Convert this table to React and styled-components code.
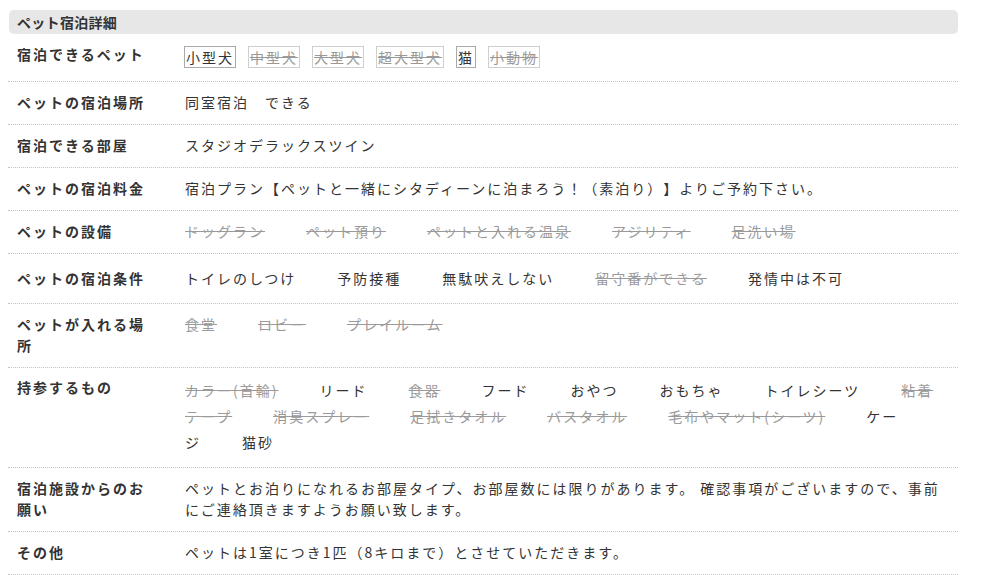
import React from 'react';
import styled, { createGlobalStyle } from 'styled-components';

const GlobalStyle = createGlobalStyle`
  body {
    margin: 8px;
    background: #fff;
    color: #333;
    font-family: "Noto Sans CJK JP", "Noto Sans", sans-serif;
    text-spacing-trim: space-all;
  }
`;

const Section = styled.section`
  width: 950px;
`;

const Heading = styled.h2`
  margin: 2px 0 0 1px;
  height: 24px;
  padding: 0 8px;
  background: #e7e7e7;
  border-radius: 5px;
  font-size: 14px;
  font-weight: bold;
  line-height: 24px;
  letter-spacing: 0.3px;
  color: #333;
`;

const Row = styled.div`
  display: flex;
  padding: ${(p) => p.$top || 10}px 11px ${(p) => p.$bottom || 11}px 9px;
  border-bottom: 1px dotted #c4c4c4;
  line-height: ${(p) => p.$lh || 21}px;
`;

const Label = styled.div`
  flex: 0 0 168px;
  box-sizing: border-box;
  padding-right: 30px;
  font-size: 14px;
  font-weight: bold;
  letter-spacing: 2px;
  line-height: ${(p) => p.$lh || 21}px;
  color: #333;
`;

const Value = styled.div`
  flex: 1;
  font-size: 14px;
  letter-spacing: 2px;
  color: #333;
  line-height: ${(p) => p.$lh || 21}px;
`;

const TagList = styled.div`
  display: flex;
  align-items: center;
  gap: 12px;
  height: 26px;
  margin-left: -1px;
`;

const Tag = styled.span`
  display: inline-block;
  padding: 0 1px;
  border: 1px solid ${(p) => (p.$off ? '#cfcfcf' : '#aaa')};
  line-height: 20px;
  font-size: 14px;
  letter-spacing: 2px;
  color: ${(p) => (p.$off ? '#999' : '#333')};
  text-decoration: ${(p) => (p.$off ? 'line-through' : 'none')};
`;

const Item = styled.span`
  margin-right: 41px;
  color: ${(p) => (p.$off ? '#9a9a9a' : '#333')};
  text-decoration: ${(p) => (p.$off ? 'line-through' : 'none')};
`;

const pets = [
  ['小型犬', false],
  ['中型犬', true],
  ['大型犬', true],
  ['超大型犬', true],
  ['猫', false],
  ['小動物', true],
];

const facilities = [
  ['ドッグラン', true],
  ['ペット預り', true],
  ['ペットと入れる温泉', true],
  ['アジリティ', true],
  ['足洗い場', true],
];

const conditions = [
  ['トイレのしつけ', false],
  ['予防接種', false],
  ['無駄吠えしない', false],
  ['留守番ができる', true],
  ['発情中は不可', false],
];

const places = [
  ['食堂', true],
  ['ロビー', true],
  ['プレイルーム', true],
];

const belongings = [
  ['カラー(首輪)', true],
  ['リード', false],
  ['食器', true],
  ['フード', false],
  ['おやつ', false],
  ['おもちゃ', false],
  ['トイレシーツ', false],
  ['粘着テープ', true],
  ['消臭スプレー', true],
  ['足拭きタオル', true],
  ['バスタオル', true],
  ['毛布やマット(シーツ)', true],
  ['ケージ', false],
  ['猫砂', false],
];

const ItemList = ({ items }) => (
  <>
    {items.map(([name, off]) => (
      <Item key={name} $off={off}>{name}</Item>
    ))}
  </>
);

const App = () => (
  <>
    <GlobalStyle />
    <Section>
      <Heading>ペット宿泊詳細</Heading>

      <Row>
        <Label>宿泊できるペット</Label>
        <Value>
          <TagList>
            {pets.map(([name, off]) => (
              <Tag key={name} $off={off}>{name}</Tag>
            ))}
          </TagList>
        </Value>
      </Row>

      <Row>
        <Label>ペットの宿泊場所</Label>
        <Value>同室宿泊　できる</Value>
      </Row>

      <Row>
        <Label>宿泊できる部屋</Label>
        <Value>スタジオデラックスツイン</Value>
      </Row>

      <Row>
        <Label>ペットの宿泊料金</Label>
        <Value>宿泊プラン【ペットと一緒にシタディーンに泊まろう！（素泊り）】よりご予約下さい。</Value>
      </Row>

      <Row>
        <Label>ペットの設備</Label>
        <Value><ItemList items={facilities} /></Value>
      </Row>

      <Row>
        <Label $lh={28}>ペットの宿泊条件</Label>
        <Value $lh={28}><ItemList items={conditions} /></Value>
      </Row>

      <Row>
        <Label>ペットが入れる場所</Label>
        <Value><ItemList items={places} /></Value>
      </Row>

      <Row $top={9} $bottom={12}>
        <Label>持参するもの</Label>
        <Value $lh={26}><ItemList items={belongings} /></Value>
      </Row>

      <Row>
        <Label>宿泊施設からのお願い</Label>
        <Value>ペットとお泊りになれるお部屋タイプ、お部屋数には限りがあります。 確認事項がございますので、事前にご連絡頂きますようお願い致します。</Value>
      </Row>

      <Row>
        <Label>その他</Label>
        <Value>ペットは1室につき1匹（8キロまで）とさせていただきます。</Value>
      </Row>
    </Section>
  </>
);

export default App;
